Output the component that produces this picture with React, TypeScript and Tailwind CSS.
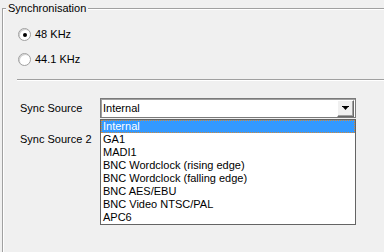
import React from 'react';

const sources = [
  'Internal',
  'GA1',
  'MADI1',
  'BNC Wordclock (rising edge)',
  'BNC Wordclock (falling edge)',
  'BNC AES/EBU',
  'BNC Video NTSC/PAL',
  'APC6',
];

const Radio: React.FC<{ checked?: boolean; label: string }> = ({ checked, label }) => (
  <div className="flex items-center gap-[4px] h-[13px]">
    <span className="w-[13px] h-[13px] rounded-full bg-white border border-[#a0a0a0] shadow-[inset_1px_1px_0_#d0d0d0] flex items-center justify-center">
      {checked && <span className="w-[4px] h-[4px] rounded-full bg-black" />}
    </span>
    <span className="text-[11px] leading-[13px] text-black">{label}</span>
  </div>
);

export default function App() {
  return (
    <div className="w-[384px] h-[252px] bg-[#f0f0f0] overflow-hidden font-['Liberation_Sans',Arial,sans-serif] text-black">
      <fieldset className="w-[420px] h-[300px] ml-[2px] mt-[2px] border-t border-l border-[#a0a0a0] shadow-[inset_1px_1px_0_#ffffff] pl-[3px]">
        <legend className="px-[2px] text-[11px] leading-[13px] bg-[#f0f0f0]">Synchronisation</legend>

        <div className="pl-[12px] pt-[13px]">
          <Radio checked label="48 KHz" />
          <div className="mt-[12px]">
            <Radio label="44.1 KHz" />
          </div>
        </div>

        {/* separator */}
        <div className="ml-[11px] mt-[13px] border-t border-[#a0a0a0] border-b border-b-white" />

        {/* Sync Source */}
        <div className="flex items-center mt-[17px] pl-[14px] h-[20px]">
          <span className="w-[80px] text-[11px] leading-[13px]">Sync Source</span>
          <div className="relative">
            <div className="w-[256px] h-[20px] bg-white border border-[#7a7a7a] shadow-[inset_1px_1px_0_#a0a0a0] flex items-center">
              <span className="flex-1 pl-[2px] text-[11px] leading-[13px]">Internal</span>
              <span className="w-[17px] h-[17px] mr-[1px] bg-[#f0f0f0] border border-t-white border-l-white border-r-[#696969] border-b-[#696969] shadow-[inset_-1px_-1px_0_#a0a0a0] flex items-center justify-center">
                <svg width="7" height="5" viewBox="0 0 7 5">
                  <polygon points="0,0 7,0 3.5,4" fill="#000" />
                  <rect x="0" y="0" width="7" height="1" fill="#000" />
                </svg>
              </span>
            </div>

            {/* open drop-down list */}
            <ul className="absolute left-0 top-full mt-[1px] w-[256px] bg-white border border-[#646464] z-10">
              {sources.map((s, i) => (
                <li
                  key={s}
                  className={`h-[13px] leading-[13px] text-[11px] pl-[2px] whitespace-nowrap ${
                    i === 0
                      ? 'bg-[#3399ff] text-white outline outline-1 outline-dotted outline-[#d08a3c] -outline-offset-1'
                      : 'text-black'
                  }`}
                >
                  {s}
                </li>
              ))}
            </ul>
          </div>
        </div>

        {/* Sync Source 2 */}
        <div className="flex items-center mt-[11px] pl-[14px] h-[20px]">
          <span className="w-[80px] text-[11px] leading-[13px]">Sync Source 2</span>
        </div>
      </fieldset>
    </div>
  );
}
